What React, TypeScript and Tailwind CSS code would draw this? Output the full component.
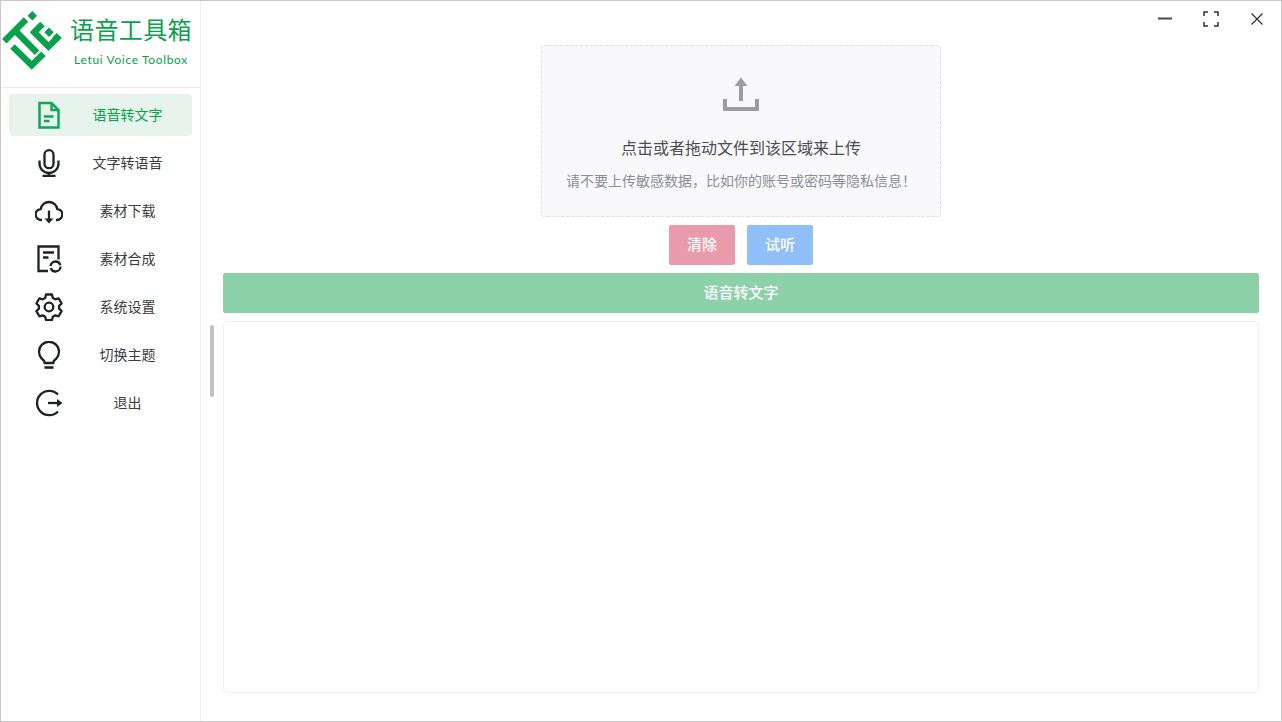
import React from "react";

const cjk = '"Noto Sans CJK SC", "Liberation Sans", sans-serif';

function Logo() {
  return (
    <svg width="64" height="62" viewBox="0 11 64 62" fill="none" className="shrink-0">
      <g fill="#0aa14c">
        <path d="M31.300 11l4.700 4.700-4.700 4.700-4.700-4.700z" />
        <path d="M48 27.600l4.700 4.700-4.700 4.700-4.700-4.700z" />
      </g>
      <g stroke="#0aa14c" strokeWidth="6.400" fill="none" strokeLinejoin="miter">
        <path d="M3.300 41.300 25 19.600" />
        <path d="M14 30.600 36 52.800" />
        <path d="M11.500 46.500 30.700 65.200 42.500 53.800" />
        <path d="M41.500 24 33.200 32.300 47.500 46.500 56.200 38 53.500 35.300" />
      </g>
    </svg>
  );
}

const ic = { fill: "none", stroke: "currentColor", strokeWidth: 2.3, strokeLinecap: "butt" as const, strokeLinejoin: "round" as const };

const icons: React.ReactNode[] = [
  <svg width="28" height="28" viewBox="0 0 28 28" {...ic} strokeWidth={2.5}>
    <path d="M4.500 2h12l7 7v17.500h-19z" strokeLinejoin="miter" />
    <path d="M16.500 2v7h7" />
    <path d="M9 15.500h9.500M9 20h5.500" />
  </svg>,
  <svg width="28" height="28" viewBox="0 0 28 28" {...ic}>
    <rect x="9.500" y="1.200" width="9" height="18" rx="4.500" />
    <path d="M4.500 11.500v3a9.500 9.500 0 0 0 19 0v-3" />
    <path d="M14 24v3.200M7.500 27h13" />
  </svg>,
  <svg width="28" height="28" viewBox="0 0 28 28" {...ic}>
    <path d="M7 23H6.500a5.500 5.500 0 0 1-.7-11 8.300 8.300 0 0 1 16.400 0 5.500 5.500 0 0 1-.7 11H21" />
    <path d="M14 13.500v10" />
    <path d="M9.500 21.500h9L14 26.500z" fill="currentColor" stroke="none" />
  </svg>,
  <svg width="28" height="28" viewBox="0 0 28 28" {...ic}>
    <path d="M13 26H3.500V1.500h20v13" strokeLinejoin="miter" />
    <path d="M8 7.500h11M8 12.500h5.500" />
    <circle cx="20.500" cy="21.500" r="5" strokeDasharray="13.700 2" />
  </svg>,
  <svg width="28" height="28" viewBox="0 0 28 28" {...ic}>
    <path d="M11 1.500h6l.8 3.400 2.500 1.400 3.300-1 3 5.200-2.500 2.400v2.800l2.500 2.400-3 5.200-3.300-1-2.500 1.400-.8 3.400h-6l-.8-3.400-2.500-1.400-3.300 1-3-5.200 2.500-2.400v-2.800L1.400 10.500l3-5.200 3.300 1 2.500-1.400z" />
    <circle cx="14" cy="14" r="4.300" />
  </svg>,
  <svg width="28" height="28" viewBox="0 0 28 28" {...ic}>
    <path d="M9.500 22v-1c0-1.500-1.500-2-2.800-3.400a10 10 0 1 1 14.600 0c-1.300 1.400-2.800 1.900-2.800 3.400v1z" />
    <path d="M9.500 26.500h9" strokeWidth={2.6} />
  </svg>,
  <svg width="28" height="28" viewBox="0 0 28 28" {...ic}>
    <path d="M23 5.500a12.200 12.200 0 1 0 0 17" />
    <path d="M13 14h10" />
    <path d="M22 10l5.500 4-5.500 4z" fill="currentColor" stroke="none" />
  </svg>,
];

const nav = ["语音转文字", "文字转语音", "素材下载", "素材合成", "系统设置", "切换主题", "退出"];

export default function App() {
  return (
    <div
      className="w-[1282px] h-[722px] flex bg-white border border-[#c8c8c8] overflow-hidden"
      style={{ fontFamily: cjk }}
    >
      <aside className="w-[200px] shrink-0 border-r border-[#eff0f2] flex flex-col">
        <div className="h-[87px] shrink-0 border-b border-[#e9ebee] flex items-start">
          <div className="mt-[10px]">
            <Logo />
          </div>
          <div className="flex flex-col items-center ml-[5px] pt-[12px]">
            <div className="text-[24px] leading-[32px] tracking-[0.4px] text-[#0aa14c] whitespace-nowrap">语音工具箱</div>
            <div
              className="text-[12px] leading-[16px] mt-[7px] tracking-[0.65px] text-[#0aa14c] whitespace-nowrap"
              style={{ fontFamily: 'Lato, "Noto Sans", sans-serif' }}
            >
              Letui Voice Toolbox
            </div>
          </div>
        </div>
        <nav className="flex flex-col gap-[6px] pt-[6px] pl-[8px] pr-[8px]">
          {nav.map((t, i) => (
            <div
              key={t}
              className={
                i === 0
                  ? "h-[42px] rounded-[4px] bg-[#e7f4ee] text-[#0aa14c] flex items-center"
                  : "h-[42px] rounded-[4px] text-[#3a3c40] flex items-center"
              }
            >
              <span className={i === 0 ? "w-[80px] flex justify-center text-[#16a458]" : "w-[80px] flex justify-center text-[#1f2225]"}>
                {icons[i]}
              </span>
              <span className="w-[77px] pb-[2px] text-center text-[14px] leading-[18px] whitespace-nowrap">{t}</span>
            </div>
          ))}
        </nav>
      </aside>

      <main className="relative flex-1 flex flex-col pl-[22px] pr-[22px]">
        <div className="absolute left-[9px] top-[324px] w-[4px] h-[72px] rounded-full bg-[#c1c1c1]" />
        <div className="absolute right-[1px] top-[6px] flex items-center text-[#303133]">
          <div className="w-[46px] h-[24px] flex items-center justify-center">
            <svg width="16" height="16" viewBox="0 0 16 16" fill="none" stroke="#46494d" strokeWidth="2">
              <path d="M1 7.500h14" />
            </svg>
          </div>
          <div className="w-[46px] h-[24px] flex items-center justify-center">
            <svg width="16" height="16" viewBox="0 0 16 16" fill="none" stroke="#303133" strokeWidth="1.500">
              <path d="M1 5V1h4M11 1h4v4M15 11v4h-4M5 15H1v-4" />
            </svg>
          </div>
          <div className="w-[46px] h-[24px] flex items-center justify-center">
            <svg width="16" height="16" viewBox="0 0 16 16" fill="none" stroke="#303133" strokeWidth="1.200">
              <path d="M2.500 2.500l11 11M13.500 2.500l-11 11" />
            </svg>
          </div>
        </div>

        <div className="mt-[44px] w-[400px] h-[172px] self-center shrink-0 border border-dashed border-[#dcdfe6] rounded-[4px] bg-[#f9f9fb] flex flex-col items-center">
          <svg width="36" height="36" viewBox="0 0 36 36" className="mt-[30px]" fill="#9d9d9d">
            <path d="M18 1.500l6.500 8.500H20v15h-4V10h-4.500z" />
            <path d="M0 23h4v8h28v-8h4v10.500a1.500 1.500 0 0 1-1.500 1.500h-33A1.500 1.500 0 0 1 0 33.500z" />
          </svg>
          <div className="mt-[24px] text-[16px] leading-[22px] text-[#4a4c50] whitespace-nowrap">点击或者拖动文件到该区域来上传</div>
          <div className="mt-[12px] text-[14px] leading-[20px] text-[#8b8e94] whitespace-nowrap">请不要上传敏感数据，比如你的账号或密码等隐私信息！</div>
        </div>

        <div className="mt-[8px] flex justify-center gap-[12px] shrink-0">
          <button className="w-[66px] h-[40px] rounded-[2px] bg-[#e99bab] text-white text-[15px] font-medium pb-[1px]">清除</button>
          <button className="w-[66px] h-[40px] rounded-[2px] bg-[#90bffa] text-white text-[15px] font-medium pb-[1px]">试听</button>
        </div>

        <button className="mt-[8px] h-[40px] shrink-0 rounded-[2px] bg-[#8dd1aa] text-white text-[15px] font-medium pb-[1px]">语音转文字</button>

        <div className="mt-[8px] h-[372px] shrink-0 border border-[#f0f0f2] rounded-[4px] bg-white" />
      </main>
    </div>
  );
}
